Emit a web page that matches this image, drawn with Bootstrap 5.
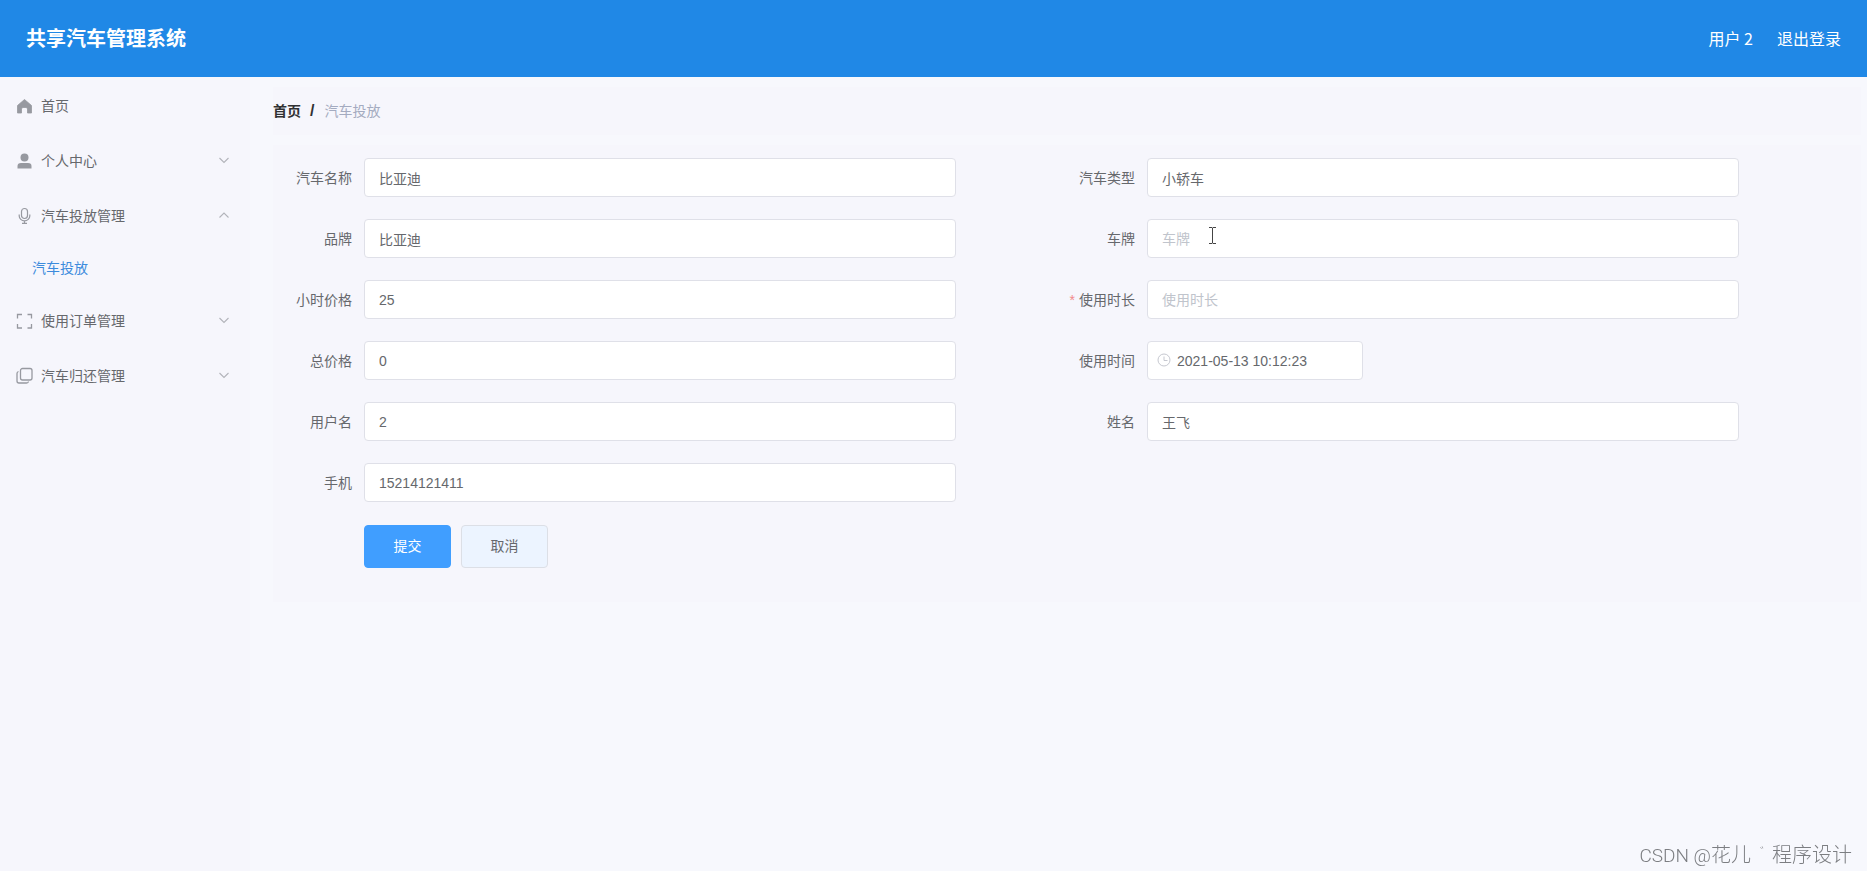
<!DOCTYPE html>
<html lang="zh-CN">
<head>
<meta charset="utf-8">
<meta name="viewport" content="width=device-width, initial-scale=1">
<title>共享汽车管理系统</title>
<link href="https://cdn.jsdelivr.net/npm/bootstrap@5.3.0/dist/css/bootstrap.min.css" rel="stylesheet">
<style>
  body { font-family: "Liberation Sans", "Noto Sans CJK SC", sans-serif; font-size: 14px; line-height: 20px; color: #66686c; background: #f7f8fd; }
  a { color: inherit; text-decoration: none; }
  .topbar { height: 77px; padding: 0 26px 2px; background: #2088e6; color: #fff; font-family: "Noto Sans CJK SC", sans-serif; }
  .topbar .brand { font-size: 20px; font-weight: 700; }
  .topbar .account { font-size: 16px; gap: 24px; }
  .sidebar { width: 250px; padding-top: 1px; background: #f6f6fc; flex-shrink: 0; }
  .menu-item { height: 55px; padding: 0 18px 0 16px; width: 100%; border: 0; background: none; color: #66686c; text-align: left; }
  .menu-item .glyph { width: 17px; height: 17px; margin-right: 8px; color: #9799a0; }
  .menu-item .arrow { width: 12px; height: 12px; margin-left: auto; margin-right: 2px; color: #b2b4ba; }
  .sub-item { height: 50px; padding-left: 32px; color: #3c8bdc; }
  .content-area { padding: 10px 6px 10px 23px; }
  .panel { background: #f6f6fc; }
  .crumbs { height: 48px; margin-bottom: 10px; }
  .crumbs a { color: #303133; font-weight: 700; }
  .crumbs .slash { margin: 0 10px 0 9px; color: #303133; font-size: 16px; font-weight: 700; }
  .crumbs .current { color: #a4abc0; }
  .form-panel { padding: 13px 11px 34px; }
  .field { width: 86%; padding-right: 1px; margin-bottom: 22px; }
  .field-label { width: 80px; padding-right: 12px; text-align: right; flex-shrink: 0; white-space: nowrap; }
  .required { color: #f28b8b; margin-right: 4px; }
  .field .form-control { height: 39px; padding: 0 14px; border: 1px solid #dfe0e8; border-radius: 4px; font-size: 14px; color: #66686c; background: #fff; }
  .field .form-control::placeholder { color: #c0c4cc; }
  .date-box { width: 216px; }
  .field .date-box .form-control { padding-left: 29px; }
  .date-box svg { left: 10px; top: 12px; color: #c6c8d0; }
  .pointer-mark { left: 61px; top: 8px; }
  .actions { padding: 1px 0 0 80px; gap: 10px; }
  .actions .btn { width: 87px; height: 43px; padding: 0; font-size: 14px; border-radius: 4px; }
  .btn-submit, .btn-submit:hover { background: #409eff; border-color: #409eff; color: #fff; }
  .btn-cancel, .btn-cancel:hover { background: #ecf4ff; border-color: #dcdfe6; color: #66686c; }
  .watermark { right: 15px; bottom: 0; gap: 9px; font-family: Roboto, "Noto Sans CJK SC", sans-serif; font-weight: 300; font-size: 20px; line-height: 30px; color: #7c7e82; }
  .watermark .latin { font-size: 19px; }
  .watermark .tick { font-size: 12px; line-height: 26px; margin-right: -9px; }
</style>
</head>
<body class="d-flex flex-column min-vh-100">
<header class="topbar d-flex align-items-center justify-content-between">
  <div class="brand">共享汽车管理系统</div>
  <div class="account d-flex"><span>用户 2</span><a href="#">退出登录</a></div>
</header>
<div class="d-flex flex-grow-1">
  <nav class="sidebar" aria-label="主菜单">
    <a class="menu-item d-flex align-items-center" href="#">
      <svg class="glyph" viewBox="0 0 17 17" fill="currentColor"><path d="M8.500 2.500 15.500 8.500V16H11.500V12Q11.500 10.500 10 10.500H7Q5.500 10.500 5.500 12V16H1.500V8.500Z" stroke="currentColor" stroke-linejoin="round" stroke-width=".8"/></svg>首页</a>
    <button type="button" class="menu-item d-flex align-items-center">
      <svg class="glyph" viewBox="0 0 17 17" fill="currentColor"><circle cx="8.500" cy="5.500" r="4"/><path d="M1.500 16.500v-2.500Q1.500 11 5 11h7Q15.500 11 15.500 14V16.500Z"/></svg>个人中心
      <svg class="arrow" viewBox="0 0 12 12" fill="none" stroke="currentColor" stroke-width="1.100"><path d="m1.500 3 4.500 4.500L10.500 3"/></svg></button>
    <button type="button" class="menu-item d-flex align-items-center" aria-expanded="true">
      <svg class="glyph" viewBox="0 0 17 17" fill="none" stroke="currentColor" stroke-width="1.200"><rect x="5.500" y="1.500" width="6" height="10" rx="3"/><path d="M3.200 7.500V9a5.300 4.800 0 0 0 10.600 0V7.500M8.500 13.800V16.300M6 16.300h5"/></svg>汽车投放管理
      <svg class="arrow" viewBox="0 0 12 12" fill="none" stroke="currentColor" stroke-width="1.100"><path d="m1.500 7.500 4.500-4.500 4.500 4.500"/></svg></button>
    <a class="sub-item d-flex align-items-center" href="#" aria-current="page">汽车投放</a>
    <button type="button" class="menu-item d-flex align-items-center">
      <svg class="glyph" viewBox="0 0 17 17" fill="none" stroke="currentColor" stroke-width="1.300"><path d="M1.500 6.500V2.500H6M11.500 2.500h4v4M15.500 12v4h-4M6 16H1.500v-4"/></svg>使用订单管理
      <svg class="arrow" viewBox="0 0 12 12" fill="none" stroke="currentColor" stroke-width="1.100"><path d="m1.500 3 4.500 4.500L10.500 3"/></svg></button>
    <button type="button" class="menu-item d-flex align-items-center">
      <svg class="glyph" viewBox="0 0 17 17" fill="none" stroke="currentColor" stroke-width="1.300"><rect x="4.500" y="1.500" width="11.500" height="11.500" rx="2"/><path d="M2.500 4.500Q1 5 1 6.500V14q0 2 2 2h7.500q1.800 0 2-1.500"/></svg>汽车归还管理
      <svg class="arrow" viewBox="0 0 12 12" fill="none" stroke="currentColor" stroke-width="1.100"><path d="m1.500 3 4.500 4.500L10.500 3"/></svg></button>
  </nav>
  <main class="content-area flex-grow-1">
    <nav class="panel crumbs d-flex align-items-center" aria-label="面包屑"><a href="#">首页</a><span class="slash">/</span><span class="current">汽车投放</span></nav>
    <form class="panel form-panel">
      <div class="row g-0">
        <div class="col-6"><div class="field d-flex align-items-center"><label class="field-label" for="carName">汽车名称</label><input class="form-control" id="carName" value="比亚迪"></div></div>
        <div class="col-6"><div class="field d-flex align-items-center"><label class="field-label" for="carType">汽车类型</label><input class="form-control" id="carType" value="小轿车"></div></div>
        <div class="col-6"><div class="field d-flex align-items-center"><label class="field-label" for="maker">品牌</label><input class="form-control" id="maker" value="比亚迪"></div></div>
        <div class="col-6"><div class="field d-flex align-items-center"><label class="field-label" for="plate">车牌</label>
          <div class="position-relative flex-grow-1"><input class="form-control" id="plate" placeholder="车牌"><svg class="pointer-mark position-absolute" width="9" height="17" viewBox="0 0 9 17" fill="none" stroke="#444"><path d="M1 .5H4L4.500 1 5 .5H8M4.500 1V16M1 16.500H4L4.500 16 5 16.500H8"/></svg></div></div></div>
        <div class="col-6"><div class="field d-flex align-items-center"><label class="field-label" for="hourPrice">小时价格</label><input class="form-control" id="hourPrice" value="25"></div></div>
        <div class="col-6"><div class="field d-flex align-items-center"><label class="field-label d-flex justify-content-end" for="duration"><span class="required">*</span>使用时长</label><input class="form-control" id="duration" placeholder="使用时长" required></div></div>
        <div class="col-6"><div class="field d-flex align-items-center"><label class="field-label" for="total">总价格</label><input class="form-control" id="total" value="0"></div></div>
        <div class="col-6"><div class="field d-flex align-items-center"><label class="field-label" for="useTime">使用时间</label>
          <div class="date-box position-relative"><input class="form-control" id="useTime" value="2021-05-13 10:12:23"><svg class="position-absolute" width="14" height="14" viewBox="0 0 14 14" fill="none" stroke="currentColor"><circle cx="7" cy="7" r="6"/><path d="M7 3.500V7.500H10.500"/></svg></div></div></div>
        <div class="col-6"><div class="field d-flex align-items-center"><label class="field-label" for="userName">用户名</label><input class="form-control" id="userName" value="2"></div></div>
        <div class="col-6"><div class="field d-flex align-items-center"><label class="field-label" for="realName">姓名</label><input class="form-control" id="realName" value="王飞"></div></div>
        <div class="col-6"><div class="field d-flex align-items-center"><label class="field-label" for="phone">手机</label><input class="form-control" id="phone" value="15214121411"></div></div>
      </div>
      <div class="actions d-flex"><button type="submit" class="btn btn-submit">提交</button><button type="button" class="btn btn-cancel">取消</button></div>
    </form>
  </main>
</div>
<div class="watermark position-fixed d-flex"><span><span class="latin">CSDN @</span>花儿</span><span class="tick">゛</span><span>程序设计</span></div>
<script src="https://cdn.jsdelivr.net/npm/bootstrap@5.3.0/dist/js/bootstrap.bundle.min.js"></script>
</body>
</html>
